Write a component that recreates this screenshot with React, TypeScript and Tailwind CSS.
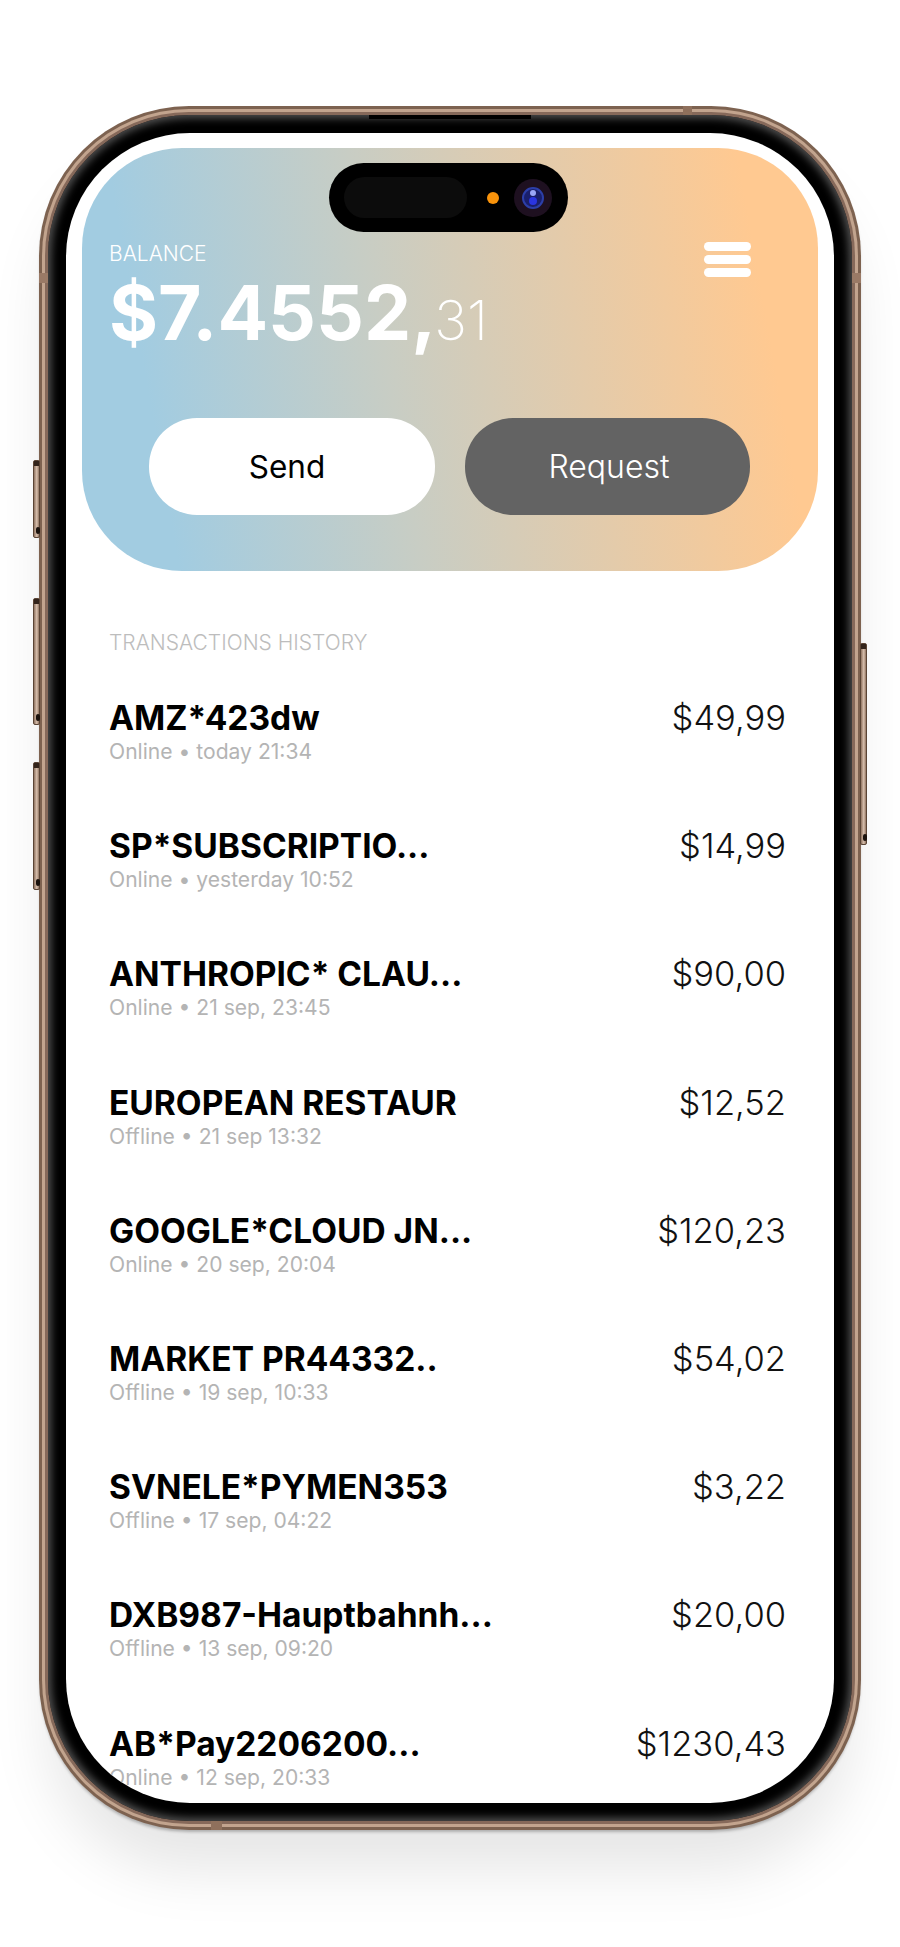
const transactions = [
  { name: "AMZ*423dw", meta: "Online • today 21:34", amount: "$49,99" },
  { name: "SP*SUBSCRIPTIO...", meta: "Online • yesterday 10:52", amount: "$14,99" },
  { name: "ANTHROPIC* CLAU...", meta: "Online • 21 sep, 23:45", amount: "$90,00" },
  { name: "EUROPEAN RESTAUR", meta: "Offline • 21 sep 13:32", amount: "$12,52" },
  { name: "GOOGLE*CLOUD JN...", meta: "Online • 20 sep, 20:04", amount: "$120,23" },
  { name: "MARKET PR44332..", meta: "Offline • 19 sep, 10:33", amount: "$54,02" },
  { name: "SVNELE*PYMEN353", meta: "Offline • 17 sep, 04:22", amount: "$3,22" },
  { name: "DXB987-Hauptbahnh...", meta: "Offline • 13 sep, 09:20", amount: "$20,00" },
  { name: "AB*Pay2206200...", meta: "Online • 12 sep, 20:33", amount: "$1230,43" },
];

const SideButton = ({ className }: { className: string }) => (
  <div
    className={`absolute w-[7px] rounded-[2px] border border-[#5a4435] bg-[linear-gradient(90deg,#8f7360,#d8c0ae_55%,#8f7360)] ${className}`}
  >
    <div className="absolute top-0 left-0 h-[5px] w-full bg-[#33241b]" />
    <div className="absolute bottom-[3px] left-[2px] h-[7px] w-[4px] rounded-full bg-[#1a120d]" />
  </div>
);

const Island = () => (
  <div className="absolute top-[30px] left-[263px] flex h-[69px] w-[239px] items-center rounded-full bg-black pl-[15px]">
    <div className="h-[41px] w-[123px] rounded-full bg-[#0c0c0c]" />
    <div className="ml-[20px] h-[12px] w-[12px] rounded-full bg-[#f9930b]" />
    <div className="ml-[15px] flex h-[38px] w-[38px] items-center justify-center rounded-full bg-[#1e1020]">
      <div className="flex h-[22px] w-[22px] flex-col items-center justify-center gap-[1px] rounded-full border-2 border-[#2c3fa8] bg-[#1a1f6b]">
        <div className="h-[6px] w-[6px] rounded-full bg-[#9aa6f7]" />
        <div className="h-[8px] w-[8px] rounded-full bg-[#2a35e0]" />
      </div>
    </div>
  </div>
);

const Row = (props: { name: string; meta: string; amount: string }) => (
  <div className="flex h-[128.2px] shrink-0 justify-between">
    <div>
      <div className="text-[33.5px] leading-[40px] font-bold text-black">{props.name}</div>
      <div className="text-[21.1px] leading-[28px] text-[#b4b4b4]">{props.meta}</div>
    </div>
    <div className="text-[34.5px] leading-[40px] font-[350] text-[#111]">{props.amount}</div>
  </div>
);

export default function App() {
  return (
    <div className="flex h-[1947px] w-[900px] justify-center overflow-hidden bg-white pt-[106px] font-['Inter',sans-serif]">
      <div className="relative h-[1724px] w-[822px] shrink-0">
        <SideButton className="top-[354px] left-[-6px] h-[78px]" />
        <SideButton className="top-[492px] left-[-6px] h-[127px]" />
        <SideButton className="top-[656px] left-[-6px] h-[128px]" />
        <SideButton className="top-[537px] right-[-6px] h-[202px]" />

        {/* bronze frame, three rings */}
        <div className="h-full w-full rounded-[150px] bg-[#7d6250] p-[3px] shadow-[0_3px_3px_-1px_rgba(0,0,0,0.25),0_50px_60px_-10px_rgba(0,0,0,0.1)]">
          <div className="h-full w-full rounded-[147px] bg-[#c2a48e] p-[3px]">
            <div className="h-full w-full rounded-[144px] bg-[#86695a] p-[3px]">
              <div className="h-full w-full rounded-[141px] bg-black p-[18px] shadow-[inset_0_0_8px_3px_#555]">
                <div className="relative h-full w-full overflow-hidden rounded-[124px] bg-white">
                  <div className="mx-[16px] mt-[15px] h-[423px] rounded-[100px] bg-[linear-gradient(80deg,#a2cce1_12%,#c8cdc4_42%,#ffc991_90%)] pt-[94px] pl-[27px]">
                    <div className="flex justify-between pr-[67px]">
                      <div className="text-[21px] leading-[24px] font-light text-white">BALANCE</div>
                      <div className="flex w-[47px] flex-col gap-[4px]">
                        <div className="h-[9px] rounded-full bg-white" />
                        <div className="h-[9px] rounded-full bg-white" />
                        <div className="h-[9px] rounded-full bg-white" />
                      </div>
                    </div>
                    <div className="-mt-[9px] flex items-baseline text-white">
                      <span className="text-[75px] leading-[90px] font-bold">$7.4552,</span>
                      <span className="-ml-[2px] text-[55px] leading-[60px] font-extralight">31</span>
                    </div>
                    <div className="mt-[60px] ml-[40px] flex gap-[30px]">
                      <div className="flex h-[97px] w-[286px] items-center justify-center rounded-[48px] bg-white pr-[10px] text-[31.5px] text-black">
                        Send
                      </div>
                      <div className="flex h-[97px] w-[285px] items-center justify-center rounded-[48px] bg-[#636363] pl-[3px] text-[32px] font-light text-white">
                        Request
                      </div>
                    </div>
                  </div>

                  <div className="pt-[58px] pr-[48px] pl-[43px]">
                    <div className="text-[21px] leading-[28px] font-light text-[#bdbdbd]">TRANSACTIONS HISTORY</div>
                    <div className="mt-[41px] flex flex-col">
                      {transactions.map((t) => (
                        <Row key={t.name} name={t.name} meta={t.meta} amount={t.amount} />
                      ))}
                    </div>
                  </div>

                  <Island />
                </div>
              </div>
            </div>
          </div>
        </div>

        {/* speaker slit and antenna bands sit on top of the frame */}
        <div className="absolute top-[9px] left-[330px] h-[4px] w-[162px] bg-black" />
        <div className="absolute top-0 left-[644px] h-[9px] w-[9px] bg-[#8f705c]" />
        <div className="absolute top-[167px] left-0 h-[10px] w-[9px] bg-[#9a7a66]" />
        <div className="absolute top-[167px] right-0 h-[10px] w-[9px] bg-[#9a7a66]" />
        <div className="absolute bottom-0 left-[172px] h-[9px] w-[11px] bg-[#8f705c]" />
      </div>
    </div>
  );
}
